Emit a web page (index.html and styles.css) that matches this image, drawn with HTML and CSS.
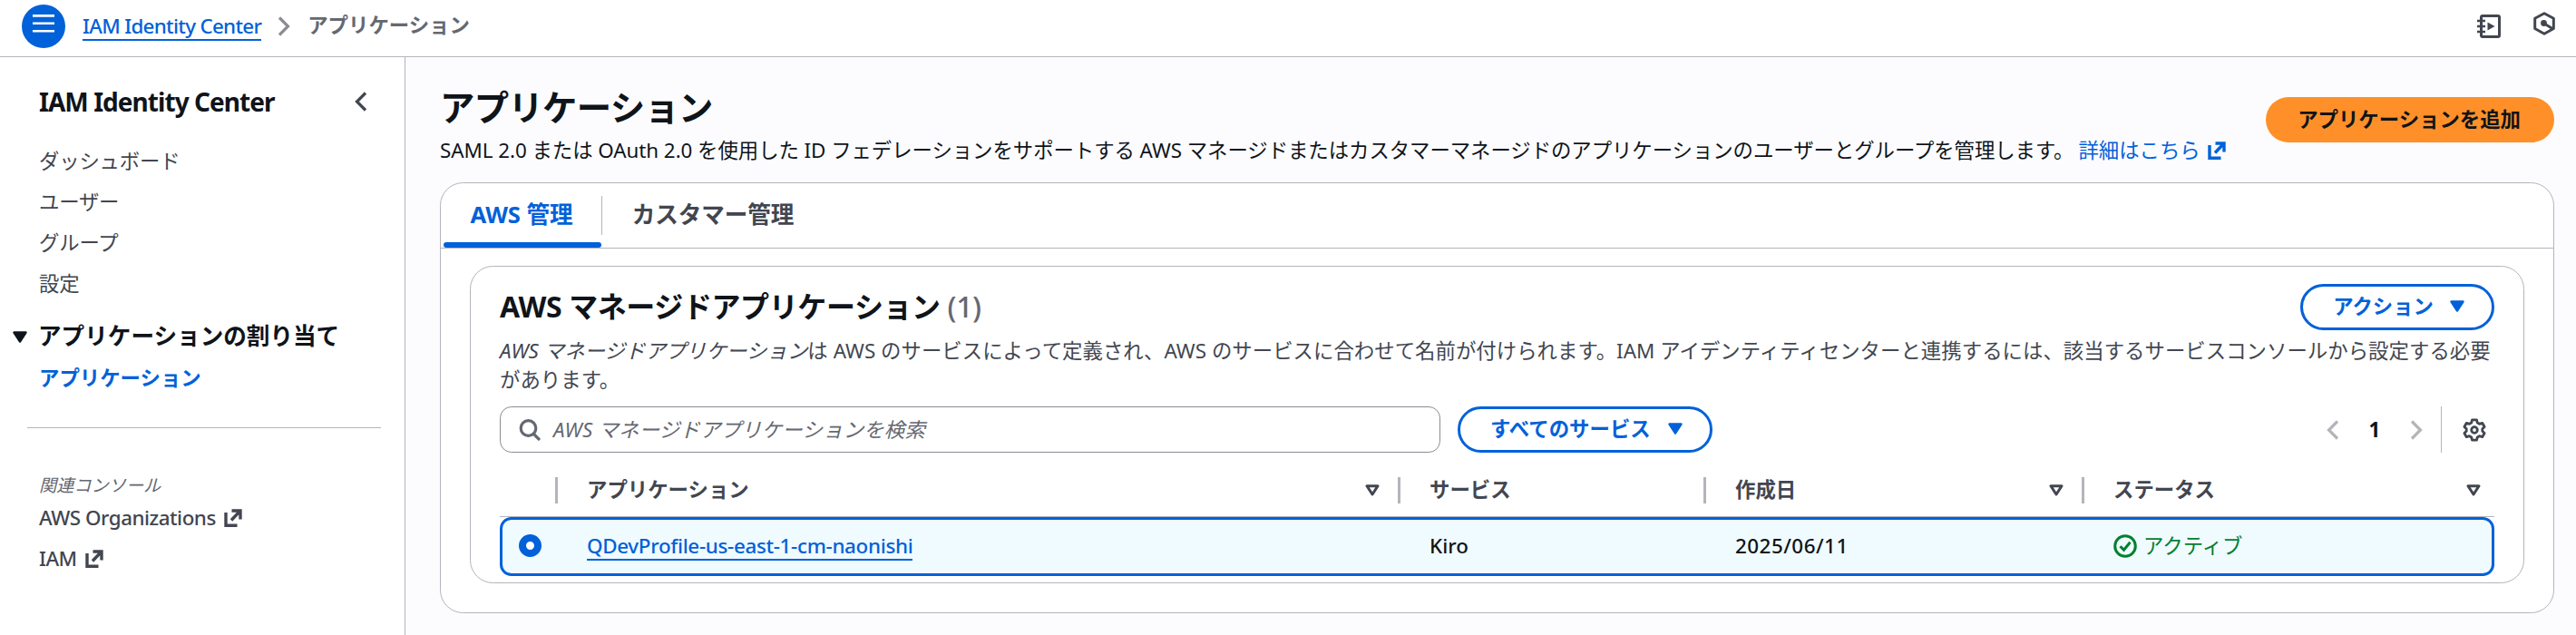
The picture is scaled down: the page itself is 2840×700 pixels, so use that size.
FILE: index.html
```html
<!DOCTYPE html>
<html lang="ja">
<head>
<meta charset="utf-8">
<title>IAM Identity Center</title>
<link rel="stylesheet" href="styles.css">
</head>
<body>
<svg class="defs" aria-hidden="true">
  <symbol id="external" viewBox="0 0 20 20"><path d="M2 4v14.2h12.5M8.5 2H18v9.5M17.5 2.5L8 12.5" fill="none" stroke="currentColor" stroke-width="3.4"/></symbol>
  <symbol id="caret" viewBox="0 0 16 13"><path d="M1.5 1.5h13L8 11.5z" fill="currentColor" stroke="currentColor" stroke-width="2.4" stroke-linejoin="round"/></symbol>
  <symbol id="sort" viewBox="0 0 16 13"><path d="M2 1.7h12L8 11z" fill="none" stroke="currentColor" stroke-width="3" stroke-linejoin="round"/></symbol>
  <symbol id="left" viewBox="0 0 14 22"><path d="M12 1.5L2.5 11 12 20.5" fill="none" stroke="currentColor" stroke-width="3.2"/></symbol>
  <symbol id="right" viewBox="0 0 14 22"><path d="M2 1.5L11.5 11 2 20.5" fill="none" stroke="currentColor" stroke-width="3.2"/></symbol>
</svg>
<header class="topbar">
  <button class="menu" aria-label="menu"><svg width="24" height="20" viewBox="0 0 24 20"><path d="M0 1.4h24M0 9.8h24M0 18.2h24" stroke="#fff" stroke-width="2.6"/></svg></button>
  <a class="crumb-link">IAM Identity Center</a>
  <svg class="crumb-sep" width="14" height="22"><use href="#right"/></svg>
  <span class="crumb-current">アプリケーション</span>
  <svg class="top-note" width="26" height="26" viewBox="0 0 26 26" fill="none" stroke="#424650" stroke-width="3"><rect x="4.5" y="1.5" width="20" height="23" rx="1.5"/><path d="M0 7h9M0 13h9M0 19h9" stroke-width="2.6"/><path d="M11.5 8.500l8 4.500-8 4.500z" fill="#424650" stroke="none"/></svg>
  <svg class="top-hex" width="24" height="26" viewBox="0 0 24 26" fill="none" stroke="#424650" stroke-width="3"><path d="M12 1.800l10.300 5.500v11.200L12 24.200 1.700 18.500V7.300z" stroke-linejoin="round"/><circle cx="11.500" cy="12.500" r="3.400" fill="#424650" stroke="none"/><path d="M12 13l9 5.500" stroke-width="2.800"/></svg>
</header>
<div class="body">
  <nav class="sidebar">
    <div class="side-head"><span class="side-title">IAM Identity Center</span><svg width="14" height="22"><use href="#left"/></svg></div>
    <a class="side-item">ダッシュボード</a>
    <a class="side-item">ユーザー</a>
    <a class="side-item">グループ</a>
    <a class="side-item">設定</a>
    <div class="side-group"><svg width="16" height="13"><use href="#caret"/></svg><span>アプリケーションの割り当て</span></div>
    <a class="side-item active">アプリケーション</a>
    <div class="side-rule"></div>
    <div class="side-note">関連コンソール</div>
    <a class="side-item ext"><span>AWS Organizations</span><svg width="20" height="20"><use href="#external"/></svg></a>
    <a class="side-item ext"><span>IAM</span><svg width="20" height="20"><use href="#external"/></svg></a>
  </nav>
  <main class="main">
    <div class="page-head">
      <div>
        <h1>アプリケーション</h1>
        <p class="page-desc"><span class="lead">SAML 2.0 または OAuth 2.0 を使用した ID フェデレーションをサポートする AWS マネージドまたはカスタマーマネージドのアプリケーションのユーザーとグループを管理します。</span><a class="more">詳細はこちら<svg width="20" height="20"><use href="#external"/></svg></a></p>
      </div>
      <button class="btn primary">アプリケーションを追加</button>
    </div>
    <section class="card">
      <div class="tabs">
        <div class="tab selected">AWS 管理</div>
        <div class="tab-sep"></div>
        <div class="tab">カスタマー管理</div>
      </div>
      <section class="panel">
        <div class="panel-head">
          <h2>AWS マネージドアプリケーション <span class="count">(1)</span></h2>
          <button class="btn">アクション<svg width="16" height="13"><use href="#caret"/></svg></button>
        </div>
        <p class="panel-desc"><em>AWS マネージドアプリケーション</em>は AWS のサービスによって定義され、AWS のサービスに合わせて名前が付けられます。IAM アイデンティティセンターと連携するには、該当するサービスコンソールから設定する必要<br>があります。</p>
        <div class="tools">
          <div class="search"><svg width="24" height="24" viewBox="0 0 24 24" fill="none" stroke="#656871" stroke-width="3.200"><circle cx="10.500" cy="10" r="8.300"/><path d="M16 16l7 7"/></svg><span>AWS マネージドアプリケーションを検索</span></div>
          <button class="btn services">すべてのサービス<svg width="16" height="13"><use href="#caret"/></svg></button>
          <div class="pager">
            <svg class="dim" width="14" height="22"><use href="#left"/></svg><b>1</b><svg class="dim" width="14" height="22"><use href="#right"/></svg>
            <div class="pager-sep"></div>
            <svg width="26" height="26" viewBox="0 0 26 26" fill="none" stroke="#424650" stroke-width="2.800"><path d="M10.500 1.800h5l.8 3.300 2.200 1.200 3.200-1 2.400 4.200-2.300 2.300v2.400l2.300 2.300-2.400 4.200-3.200-1-2.200 1.200-.8 3.300h-5l-.8-3.300-2.200-1.200-3.200 1-2.400-4.200 2.300-2.300v-2.400L1.900 9.500l2.400-4.200 3.200 1 2.200-1.200z" stroke-linejoin="round"/><circle cx="13" cy="13" r="3.300"/></svg>
          </div>
        </div>
        <div class="grid thead">
          <div class="cell"></div>
          <div class="cell">アプリケーション<svg width="16" height="13"><use href="#sort"/></svg></div>
          <div class="cell">サービス</div>
          <div class="cell">作成日<svg width="16" height="13"><use href="#sort"/></svg></div>
          <div class="cell">ステータス<svg width="16" height="13"><use href="#sort"/></svg></div>
        </div>
        <div class="grid row">
          <div class="radio"></div>
          <div class="name"><a>QDevProfile-us-east-1-cm-naonishi</a></div>
          <div class="service">Kiro</div>
          <div class="date">2025/06/11</div>
          <div class="status"><svg width="26" height="26" viewBox="0 0 26 26" fill="none" stroke="#00802f" stroke-width="3"><circle cx="13" cy="13" r="11.300"/><path d="M7.500 13.300l4 4 7-8.500"/></svg>アクティブ</div>
        </div>
      </section>
    </section>
  </main>
</div>
</body>
</html>
```
FILE: styles.css
```css
* { box-sizing: border-box; }
body {
  margin: 0;
  width: 2840px;
  height: 700px;
  overflow: hidden;
  display: flex;
  flex-direction: column;
  background: #fff;
  color: #0f141a;
  font: 22.4px/32px "Noto Sans", "Noto Sans CJK JP", sans-serif;
  white-space: nowrap;
}
.defs { display: none; }
svg { flex: none; }
h1, h2, p { margin: 0; }
.topbar {
  height: 63px;
  border-bottom: 1px solid #b4b4bb;
  display: flex;
  align-items: flex-start;
  padding: 5px 23px 0 24px;
}
.menu {
  width: 48px;
  height: 48px;
  border: 0;
  border-radius: 50%;
  background: #0061d9;
  padding: 11px 12px;
  display: flex;
}
.crumb-link {
  margin: 8px 0 0 19px;
  height: 32px;
  color: #0061d9;
  border-bottom: 2px solid #0061d9;
  font-weight: 500;
  letter-spacing: -0.7px;
}
.crumb-sep { color: #8c8c94; margin: 13px 19px 0 18px; }
.crumb-current { color: #656871; font-weight: 700; margin-top: 7px; }
.top-note { margin: 11px 36px 0 auto; }
.top-hex { margin-top: 8px; }
.body { flex: 1; display: flex; }
.sidebar {
  width: 447px;
  border-right: 1px solid #b4b4bb;
  padding: 32px 26px 0 43px;
  display: flex;
  flex-direction: column;
}
.side-head {
  display: flex;
  justify-content: space-between;
  align-items: center;
  height: 34px;
  margin-bottom: 26px;
  padding-right: 15px;
  color: #424650;
}
.side-title { font-size: 28px; font-weight: 700; letter-spacing: -0.95px; color: #0f141a; }
.side-item { height: 45px; line-height: 45px; color: #424650; letter-spacing: -0.2px; }
.side-item.active { color: #0061d9; font-weight: 700; letter-spacing: 0; }
.side-group {
  display: flex;
  align-items: center;
  gap: 12px;
  margin: 12px 0 -1px -29px;
  height: 48px;
  font-size: 25.6px;
  font-weight: 700;
}
.side-rule { height: 1px; background: #b4b4bb; margin: 32px 0 0 -13px; flex: none; }
.side-note { font-size: 19.2px; font-style: italic; color: #656871; margin: 47px 0 -3px; }
.side-item.ext { display: flex; align-items: center; gap: 10px; font-weight: 500; letter-spacing: -0.5px; }
.side-item.ext svg { margin-left: -1px; }
.main { flex: 1; background: #fcfcfe; padding: 33px 24px 0 38px; }
.page-head { display: flex; justify-content: space-between; height: 105px; }
h1 { font-size: 38.4px; line-height: 44px; font-weight: 700; letter-spacing: -0.7px; }
.page-desc { display: flex; margin-top: 10px; }
.lead { letter-spacing: -0.05px; }
.more { color: #0061d9; display: flex; align-items: center; gap: 8px; margin-left: 5px; }
.btn {
  height: 51px;
  border: 3px solid #0061d9;
  border-radius: 26px;
  background: #fff;
  color: #0061d9;
  font: 700 22.4px/32px "Noto Sans", "Noto Sans CJK JP", sans-serif;
  padding: 0 30px 2px 33px;
  display: flex;
  align-items: center;
  gap: 18px;
}
.services { gap: 19px; }
.primary { margin-top: 11px; background: #ff9029; border: 0; color: #0f141a; padding: 0 37px 1px 35px; height: 50px; }
.card {
  height: 475px;
  border: 1px solid #b4b4bb;
  border-radius: 25.6px;
  background: #fff;
}
.tabs { height: 72px; border-bottom: 1px solid #b4b4bb; display: flex; padding-left: 3px; }
.tab {
  width: 174px;
  display: flex;
  justify-content: center;
  align-items: center;
  padding: 6px 2px 2px 0;
  font-size: 25.6px;
  font-weight: 700;
  letter-spacing: -0.1px;
  color: #424650;
  border-bottom: 6px solid transparent;
}
.tab:last-child { width: 246px; }
.tab.selected { color: #0061d9; position: relative; }
.tab.selected::after {
  content: "";
  position: absolute;
  left: 0;
  right: 0;
  bottom: -6px;
  height: 6px;
  border-radius: 3px;
  background: #0061d9;
}
.tab-sep { width: 1px; height: 43px; margin-top: 14px; background: #b4b4bb; }
.panel {
  margin: 19px 32px 0;
  height: 350px;
  border: 1px solid #b4b4bb;
  border-radius: 25.6px;
  padding: 19px 32px 0;
}
.panel-head { display: flex; justify-content: space-between; height: 58px; }
h2 { font-size: 32px; line-height: 50px; font-weight: 700; letter-spacing: -0.4px; }
.count { font-weight: 500; color: #656871; }
.panel-desc { color: #424650; height: 77px; letter-spacing: 0.03px; }
.tools { display: flex; gap: 19px; }
.search {
  width: 1037px;
  height: 51px;
  border: 1px solid #8c8c94;
  border-radius: 12.8px;
  padding-left: 20px;
  display: flex;
  align-items: center;
  gap: 14px;
  color: #656871;
  font-style: italic;
  letter-spacing: 0.2px;
}
.pager { margin-left: auto; display: flex; align-items: center; padding-right: 9px; }
.pager b { width: 78px; text-align: center; }
.dim { color: #b4b4bb; }
.pager-sep { width: 1px; height: 51px; background: #b4b4bb; margin: 0 23px 0 20px; }
.grid { display: grid; grid-template-columns: 64px 929px 337px 417px 452px; }
.thead { margin-top: 27px; height: 44px; border-bottom: 1px solid #b4b4bb; }
.cell {
  height: 29px;
  line-height: 27px;
  display: flex;
  align-items: center;
  justify-content: space-between;
  color: #424650;
  font-weight: 700;
  padding: 0 20px 2px 32px;
  border-right: 3px solid #b4b4bb;
}
.cell svg { margin-top: 2px; }
.cell:last-child { border: 0; padding-right: 15px; }
.row {
  height: 65px;
  border: 3px solid #0061d9;
  border-radius: 12.8px;
  background: #f0fbff;
  align-items: center;
  grid-template-columns: 61px 929px 337px 417px 1fr;
}
.row > div { padding-left: 32px; padding-bottom: 2px; }
.row > .radio {
  width: 25px;
  height: 25px;
  margin: 0 0 2px 18px;
  padding: 0;
  border: 8px solid #0061d9;
  border-radius: 50%;
  background: #fff;
}
.name a {
  color: #0061d9;
  display: block;
  width: max-content;
  height: 32px;
  border-bottom: 2px solid #0061d9;
  font-weight: 500;
  letter-spacing: -0.32px;
}
.service { font-weight: 500; }
.date { font-weight: 500; letter-spacing: 0.5px; }
.status { color: #00802f; display: flex; align-items: center; gap: 7px; }
```
